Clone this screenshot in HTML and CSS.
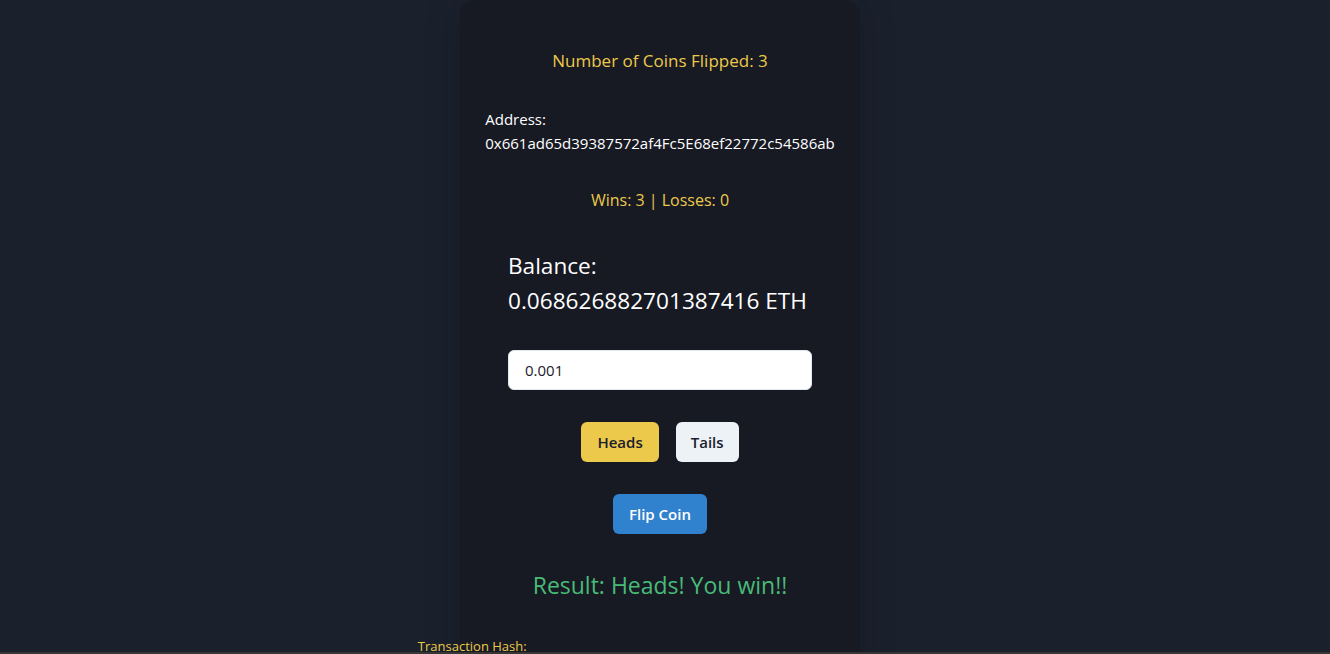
FILE: index.html
```html
<!DOCTYPE html>
<html lang="en">
<head>
<meta charset="utf-8">
<title>Coin Flip</title>
<link rel="stylesheet" href="styles.css">
</head>
<body>
<main class="page">
  <section class="card">
    <p class="flips">Number of Coins Flipped: 3</p>
    <div class="address">
      <div>Address:</div>
      <div>0x661ad65d39387572af4Fc5E68ef22772c54586ab</div>
    </div>
    <p class="score">Wins: 3 | Losses: 0</p>
    <div class="wallet">
      <div class="balance">
        <div>Balance:</div>
        <div>0.068626882701387416 ETH</div>
      </div>
      <input class="amount" type="text" value="0.001">
    </div>
    <div class="choices">
      <button class="btn btn-heads">Heads</button>
      <button class="btn btn-tails">Tails</button>
    </div>
    <div class="actions">
      <button class="btn btn-flip">Flip Coin</button>
      <p class="result">Result: Heads! You win!!</p>
    </div>
    <div class="tx">
      <div>Transaction Hash:</div>
      <div class="hash">0x3f9a2c71b8e04d5a6c2e9f1b7d83a0c45e6f12b9a7d3c8e0f4b61a2d95c7e3f8</div>
    </div>
  </section>
</main>
<div class="edge"></div>
</body>
</html>
```
FILE: styles.css
```css
* { box-sizing: border-box; }
html, body {
  margin: 0;
  padding: 0;
  background: #1a202c;
  font-family: "Open Sans", "Noto Sans", sans-serif;
  color: #ffffff;
}
.page {
  display: flex;
  justify-content: center;
  min-height: 100vh;
}
.card {
  width: 400px;
  margin-right: 10px;
  background: #171923;
  border-radius: 16px 16px 0 0;
  box-shadow: 0 0 40px rgba(0, 0, 0, 0.12);
  padding: 49px 0 40px;
  display: flex;
  flex-direction: column;
  align-items: center;
  gap: 33px;
}
p { margin: 0; }
.flips, .score {
  color: #ecc94b;
  font-size: 16px;
  line-height: 24px;
}
.flips { font-size: 17px; }
.address {
  margin-top: 1px;
  font-size: 15px;
  line-height: 24px;
  text-align: left;
  white-space: nowrap;
}
.wallet {
  width: 304px;
  display: flex;
  flex-direction: column;
  gap: 32px;
  margin-top: 3px;
}
.balance {
  font-size: 22.6px;
  line-height: 35px;
  white-space: nowrap;
}
.amount {
  width: 100%;
  height: 40px;
  border: 1px solid #e2e8f0;
  border-radius: 6px;
  background: #ffffff;
  padding: 0 16px;
  font-family: inherit;
  font-size: 15px;
  color: #1a202c;
  outline: none;
}
.choices {
  margin-top: -1px;
  display: flex;
  gap: 17px;
}
.actions {
  margin-top: -1px;
  display: flex;
  flex-direction: column;
  align-items: center;
  gap: 33px;
}
.btn {
  height: 40px;
  border: none;
  border-radius: 6px;
  padding: 0 16px;
  font-family: inherit;
  font-size: 15px;
  font-weight: 600;
  cursor: pointer;
}
.btn-heads { background: #ecc94b; color: #1a202c; }
.btn-tails { background: #edf2f7; color: #1a202c; padding: 0 15px; }
.btn-flip { background: #3182ce; color: #ffffff; }
.result {
  color: #48bb78;
  font-size: 23px;
  line-height: 36px;
}
.tx {
  color: #ecc94b;
  font-size: 13px;
  line-height: 20px;
  white-space: nowrap;
  text-align: left;
}
.hash { letter-spacing: 0.2px; }
.edge {
  position: fixed;
  left: 0;
  right: 0;
  bottom: 0;
  height: 2px;
  background: #383632;
}
```
